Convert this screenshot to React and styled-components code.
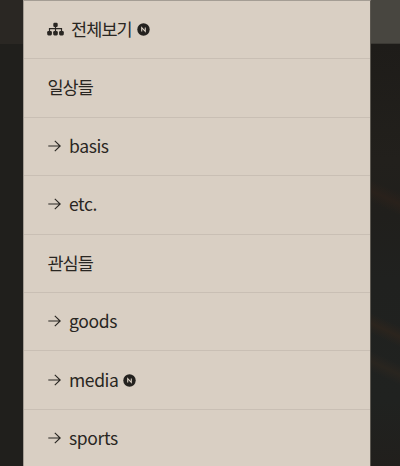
import React from "react";
import styled, { createGlobalStyle } from "styled-components";

const GlobalStyle = createGlobalStyle`
  * { box-sizing: border-box; }
  body { margin: 0; background: #201f1c; overflow: hidden; }
`;

const Page = styled.main`
  display: grid;
  grid-template-columns: 23px 348px 29px;
  width: 400px;
  height: 466px;
  overflow: hidden;
  font-family: "Noto Sans CJK KR", "Noto Sans", sans-serif;
  color: #292622;
`;

const LeftBackdrop = styled.div`
  background: linear-gradient(#2a2723 0 44px, #201f1c 44px);
`;

const RightBackdrop = styled.div`
  background:
    linear-gradient(#484640 0 43px, #3b3934 43px 44px, transparent 44px),
    linear-gradient(205deg, transparent 30%, #29211b 50%, transparent 70%) 0 175px / 29px 45px no-repeat,
    linear-gradient(205deg, transparent 30%, #2b241d 50%, transparent 70%) 0 310px / 29px 40px no-repeat,
    linear-gradient(205deg, transparent 30%, #29251f 50%, transparent 70%) 0 348px / 29px 40px no-repeat,
    linear-gradient(#1e1c19 44px, #22201c 160px, #201f1c 215px, #20211f 280px, #202220 400px, #211f1c 466px);
`;

const Menu = styled.nav`
  height: 466px;
  overflow: hidden;
  background: #d9cfc3;
  border: solid #a49d94;
  border-width: 1px 1px 0;
  border-right-color: #5b5750;
`;

const Row = styled.a`
  display: flex;
  align-items: center;
  height: 58.45px;
  padding: 0 0 1px 24px;
  border-bottom: 1px solid #c9bfb4;
  font-size: 17.5px;
  line-height: 24px;
  white-space: nowrap;

  &:first-child { height: 58.2px; }
`;

const Label = styled.span`
  margin-left: ${({ $heading }) => ($heading ? "-0.6px" : "0")};
  letter-spacing: ${({ $korean }) => ($korean ? "-0.9px" : "-0.38px")};
`;

const SitemapSvg = styled.svg`
  width: 17px;
  height: 14px;
  margin: 0 7px 0 -1px;
`;

const ArrowSvg = styled.svg`
  width: 14px;
  height: 14px;
  margin-right: 7px;
`;

const BadgeSvg = styled.svg`
  width: 13px;
  height: 13px;
  margin: 1px 0 0 ${({ $korean }) => ($korean ? "5.4px" : "4.2px")};
`;

const SitemapIcon = () => (
  <SitemapSvg viewBox="0 0 17 14" aria-hidden="true">
    <path d="M8.5 4v6M2.5 10V6.7h12V10" fill="none" stroke="#292622" strokeWidth="1.2" />
    <g fill="#292622">
      <rect x="6.3" y="0.7" width="4.4" height="4.2" rx="1.2" />
      <rect x="0.2" y="9" width="4.7" height="4.4" rx="1.3" />
      <rect x="6.2" y="9" width="4.6" height="4.4" rx="1.3" />
      <rect x="12.1" y="9" width="4.7" height="4.4" rx="1.3" />
    </g>
  </SitemapSvg>
);

const ArrowIcon = () => (
  <ArrowSvg viewBox="0 0 14 14" fill="none" stroke="#292622" strokeWidth="1.1" aria-hidden="true">
    <path d="M.3 7h11.9M6.8 1.8 12.2 7 6.8 12.2" />
  </ArrowSvg>
);

const NewBadge = ({ korean }) => (
  <BadgeSvg $korean={korean} viewBox="0 0 13 13" role="img" aria-label="new">
    <circle cx="6.5" cy="6.5" r="6.2" fill="#24221f" />
    <path d="M4.7 8.6V4.6l3.6 3.8V4.4" fill="none" stroke="#d9cfc3" strokeWidth="1.1" />
  </BadgeSvg>
);

const items = [
  { label: "전체보기", korean: true, icon: "sitemap", fresh: true },
  { label: "일상들", korean: true },
  { label: "basis", icon: "arrow" },
  { label: "etc.", icon: "arrow" },
  { label: "관심들", korean: true },
  { label: "goods", icon: "arrow" },
  { label: "media", icon: "arrow", fresh: true },
  { label: "sports", icon: "arrow" },
];

export default function App() {
  return (
    <>
      <GlobalStyle />
      <Page>
        <LeftBackdrop />
        <Menu>
          {items.map(({ label, korean, icon, fresh }) => (
            <Row key={label}>
              {icon === "sitemap" && <SitemapIcon />}
              {icon === "arrow" && <ArrowIcon />}
              <Label $korean={korean} $heading={!icon}>{label}</Label>
              {fresh && <NewBadge korean={korean} />}
            </Row>
          ))}
        </Menu>
        <RightBackdrop />
      </Page>
    </>
  );
}
